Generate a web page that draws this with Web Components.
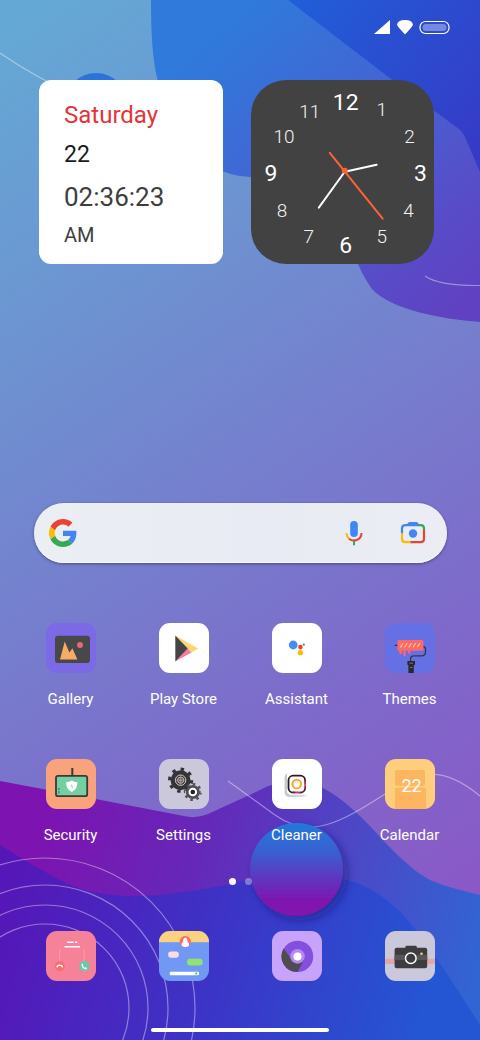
<!DOCTYPE html>
<html lang="en">
<head>
<meta charset="utf-8">
<meta name="viewport" content="width=device-width, initial-scale=1">
<title>Home</title>
<style>
    html, body {margin: 0;}
    body {font-family: Roboto, "Open Sans", sans-serif;color: #fff;background: #3a38c8;}
</style>
</head>
<body>
<home-screen>
    <wall-paper slot="wallpaper"></wall-paper>
    <status-bar slot="status"></status-bar>

    <date-card slot="widgets" day="Saturday" date="22" time="02:36:23" period="AM"></date-card>
    <clock-face slot="widgets"></clock-face>

    <search-bar slot="search"></search-bar>

    <app-tile slot="apps" label="Gallery">
        <svg viewBox="0 0 50 50">
            <rect width="50" height="50" fill="#7b69e5"/>
            <rect x="9" y="12.7" width="35" height="27.3" rx="3" fill="#484749"/>
            <path d="M14 36.4 18.7 18.6 23.4 29.4 26.4 25.2 31.4 36.4Z" fill="#f8ac63"/>
            <circle cx="34" cy="22" r="3" fill="#e66a74"/>
        </svg>
    </app-tile>
    <app-tile slot="apps" label="Play Store">
        <svg viewBox="0 0 50 50">
            <rect width="50" height="50" fill="#fff"/>
            <path d="M16.3 12.6 39.3 25.6 32.4 29.4 28.8 25.5Z" fill="#fbd86f"/>
            <path d="M16.3 38.4 28.8 25.5 32.4 29.4Z" fill="#f87b9b"/>
            <path d="M16.3 12.6 28.8 25.5 16.3 38.4Z" fill="#454547"/>
        </svg>
    </app-tile>
    <app-tile slot="apps" label="Assistant">
        <svg viewBox="0 0 50 50">
            <rect width="50" height="50" fill="#fff"/>
            <circle cx="25.5" cy="26.5" r="9.5" fill="#fdfdfd"/>
            <circle cx="21.2" cy="22" r="4.4" fill="#4a8af4"/>
            <circle cx="28.4" cy="24.1" r="2.3" fill="#ea4335"/>
            <circle cx="28.4" cy="29.7" r="2.6" fill="#fbbc05"/>
            <circle cx="31.8" cy="21.7" r="1.1" fill="#34a853"/>
        </svg>
    </app-tile>
    <app-tile slot="apps" label="Themes">
        <svg viewBox="0 0 50 50">
            <rect width="50" height="50" fill="#6470e4"/>
            <path d="M9.7 22.3H13M38 23.6Q40.5 23.6 40.5 26V29Q40.5 32.8 36.5 32.8H29Q25.6 32.8 25.6 35.6V39" fill="none" stroke="#38363c" stroke-width="1.3"/>
            <path d="M13.8 17H37Q38.4 17 38.4 18.5V26.2Q38.4 27.7 37 27.7H25.4V30A1.1 1.1 0 0 1 23.2 30V27.7H20.7V32A1.2 1.2 0 0 1 18.3 32V27.7H16.9V30A1.3 1.3 0 0 1 14.3 30V27.7H13.8Q12.4 27.7 12.4 26.2V18.5Q12.4 17 13.8 17Z" fill="#fd676e"/>
            <path d="M15.4 24.4 18 20.2M19.6 24.4 22.2 20.2M23.8 24.4 26.4 20.2M28 24.4 30.6 20.2M32.2 24.4 34.8 20.2" stroke="#fbcf74" stroke-width="1.2"/>
            <path d="M22.4 38H30V41.4L28.8 42.6V50H23.4V42.6L22.4 41.4Z" fill="#29282c"/>
            <path d="M24.5 40.2H28M25.2 44.5H27.3" stroke="#8c8c94" stroke-width=".8"/>
        </svg>
    </app-tile>
    <app-tile slot="apps" label="Security">
        <svg viewBox="0 0 50 50">
            <rect width="50" height="50" fill="#faa27c"/>
            <path d="M26.3 9V17" stroke="#39393b" stroke-width="2"/>
            <rect x="10" y="16.8" width="31.2" height="20.4" rx="2" fill="#74d0a3" stroke="#39393b" stroke-width="1.8"/>
            <path d="M25.8 21.4Q28.6 23.2 31.4 23.2Q31.8 30 25.8 33Q19.8 30 20.2 23.2Q23 23.2 25.8 21.4Z" fill="#fff"/>
            <path d="M25.6 25.4 25 27.2H26.8L26 29" fill="none" stroke="#74d0a3" stroke-width=".7"/>
            <path d="M12.9 29V31M12.9 32V34.4" stroke="#39795e" stroke-width="1.2"/>
        </svg>
    </app-tile>
    <app-tile slot="apps" label="Settings">
        <svg viewBox="0 0 50 50">
            <rect width="50" height="50" fill="#cac8da"/>
            <circle cx="21.6" cy="21.2" r="10" fill="#353436"/>
            <circle cx="21.6" cy="21.2" r="11" pathLength="80" fill="none" stroke="#353436" stroke-width="3.2" stroke-dasharray="4 6"/>
            <circle cx="21.6" cy="21.2" r="5.2" fill="none" stroke="#cfcfd4" stroke-width="1"/>
            <circle cx="21.6" cy="21.2" r="3.1" fill="#555" stroke="#cfcfd4" stroke-width=".9"/>
            <path d="M21.6 16V26.4M16.4 21.2H26.8" stroke="#9c9ca2" stroke-width=".7"/>
            <circle cx="21.6" cy="21.2" r="1.3" fill="#ee7c77"/>
            <circle cx="33.8" cy="33" r="7" fill="#514f52"/>
            <circle cx="33.8" cy="33" r="7.8" pathLength="80" fill="none" stroke="#514f52" stroke-width="2.6" stroke-dasharray="4 6"/>
            <circle cx="33.8" cy="33" r="3.3" fill="#252527" stroke="#fff" stroke-width="2"/>
        </svg>
    </app-tile>
    <app-tile slot="apps" label="Cleaner">
        <svg viewBox="0 0 50 50">
            <defs>
                <linearGradient id="ring" x1="0" y1="0" x2="1" y2="1">
                    <stop offset=".6" stop-color="#2c1a2b"/>
                    <stop offset=".78" stop-color="#e83b8c"/>
                    <stop offset=".9" stop-color="#4c1734"/>
                </linearGradient>
                <linearGradient id="paper" x1="0" y1="0" x2="1" y2="0">
                    <stop offset="0" stop-color="#c8c8c8"/>
                    <stop offset=".7" stop-color="#dadada"/>
                    <stop offset="1" stop-color="#f4f4f4"/>
                </linearGradient>
            </defs>
            <rect width="50" height="50" fill="#fff"/>
            <rect x="12.6" y="14" width="23.5" height="24" rx="4.5" fill="url(#paper)"/>
            <rect x="15" y="12" width="22" height="23.8" rx="4" fill="#fff"/>
            <rect x="16.5" y="16.7" width="16.6" height="16.8" rx="4.6" fill="#fff" stroke="url(#ring)" stroke-width="1.8"/>
            <circle cx="24.8" cy="25" r="4.4" fill="#fde3b0" stroke="#f5a832" stroke-width="1.9"/>
            <path d="M22.2 23.5H27.4L26.8 28.3H22.8Z" fill="#fff"/>
        </svg>
    </app-tile>
    <app-tile slot="apps" label="Calendar">
        <svg viewBox="0 0 50 50">
            <rect width="50" height="50" fill="#fdce7c"/>
            <rect x="10" y="11" width="30" height="15.8" rx="1.8" fill="#fdb55f"/>
            <path d="M11.5 28.8H39.5Q41 28.8 41 30.5V50H10V30.5Q10 28.8 11.5 28.8Z" fill="#fdb55f"/>
            <text x="26.5" y="33" font-size="18" text-anchor="middle" fill="#fff">22</text>
        </svg>
    </app-tile>

    <page-dots slot="pages"></page-dots>

    <app-tile slot="dock" name="Phone">
        <svg viewBox="0 0 50 50">
            <rect width="50" height="50" fill="#f6829a"/>
            <path d="M21 11.3H27.6M29 11.3H31.3M18.4 15.7H34" stroke="#fff" stroke-width="1.5"/>
            <path d="M13.7 18V30M38.2 18V30" stroke="#fba9b8" stroke-width=".7"/>
            <circle cx="13.7" cy="35.2" r="5" fill="#fd6d6b"/>
            <path d="M10.4 36.6Q10 33.6 13.7 33.6T17 36.6L15.2 36.2V35.1Q13.7 34.7 12.2 35.1V36.2Z" fill="#fff"/>
            <circle cx="38.3" cy="35.2" r="5.1" fill="#5dcfa9"/>
            <path d="M36.2 32.4 37.5 33.6 37 34.8Q37.6 36.2 38.9 36.8L40.1 36.3 41.2 37.5Q40.3 39 38.3 38Q36.2 36.8 35.4 34.5Q35.2 33.2 36.2 32.4Z" fill="#fff"/>
        </svg>
    </app-tile>
    <app-tile slot="dock" name="Messages">
        <svg viewBox="0 0 50 50">
            <rect width="50" height="50" fill="#7199f3"/>
            <rect width="50" height="11.2" fill="#fcd17f"/>
            <circle cx="26.3" cy="10.6" r="5.6" fill="#fc6c66"/>
            <path d="M26.3 6.8Q28.4 6.8 28.3 9.5Q28.2 11.6 29.9 12.1V15Q26.3 17 22.7 15V12.1Q24.4 11.6 24.3 9.5Q24.2 6.8 26.3 6.8Z" fill="#fff"/>
            <rect x="9.2" y="20.6" width="10.6" height="6.2" rx="2.8" fill="#fbdce4"/>
            <rect x="28" y="27.8" width="15.6" height="6.8" rx="3" fill="#8fe372"/>
            <rect x="10.7" y="40.8" width="29.4" height="3.4" rx="1.2" fill="#fff"/>
            <circle cx="37.2" cy="42.5" r="1.2" fill="#75d45c"/>
        </svg>
    </app-tile>
    <app-tile slot="dock" name="Browser">
        <svg viewBox="0 0 50 50">
            <rect width="50" height="50" fill="#c8a3fc"/>
            <circle cx="25.5" cy="25.4" r="15.7" fill="#844fdd"/>
            <path d="M11.6 17.4A15.7 15.7 0 0 0 25.5 41.1L32.2 28.6 18.8 27.6Z" fill="#4e4b51"/>
            <circle cx="25.5" cy="25.4" r="7.3" fill="#b688f5"/>
            <circle cx="25.5" cy="25.4" r="4" fill="#fff"/>
        </svg>
    </app-tile>
    <app-tile slot="dock" name="Camera">
        <svg viewBox="0 0 50 50">
            <rect width="50" height="50" fill="#cac8da"/>
            <rect y="27.8" width="50" height="5.2" fill="#e5a6a8"/>
            <path d="M11.6 16.8H20.4V15.8Q20.4 14.7 21.6 14.7H30.6Q31.8 14.7 31.8 15.8V16.8H40.2Q42.2 16.8 42.2 18.8V35.2Q42.2 37.2 40.2 37.2H11.6Q9.6 37.2 9.6 35.2V18.8Q9.6 16.8 11.6 16.8Z" fill="#3d3d3f"/>
            <rect x="9.6" y="23.8" width="32.6" height="5.2" fill="#565658"/>
            <circle cx="25.8" cy="27.2" r="5.3" fill="#3d3d3f" stroke="#fff" stroke-width="1.5"/>
            <circle cx="36.5" cy="22.8" r="1.3" fill="#f9d45f"/>
        </svg>
    </app-tile>
</home-screen>

<script>
class BaseElement extends HTMLElement {
    constructor() {
        super();
        this.$root = this.attachShadow({ mode: 'open' });
    }

    connectedCallback() {
        this.$root.innerHTML = this.render();
    }
}

customElements.define('home-screen', class extends BaseElement {
    render() {
        return `<style>
                :host {display: flex;flex-direction: column;position: relative;min-height: 100vh;overflow: hidden;box-sizing: border-box;padding-bottom: 8px;isolation: isolate;}
                .widgets {display: grid;grid-template-columns: 1fr 1fr;gap: 28px;padding: 0 46px 0 39px;}
                .search {margin-top: auto;padding: 60px 33px 0 34px;}
                .grid {display: grid;grid-template-columns: repeat(4, 1fr);row-gap: 50px;padding: 0 14px;}
                .apps {margin-top: 60px;}
                .pages {margin-top: 33px;}
                .dock {margin-top: 45px;}
                .handle {width: 37%;height: 4px;margin: 47px auto 0;border-radius: 2px;background: #fff;}
            </style>
            <slot name="wallpaper"></slot>
            <slot name="status"></slot>
            <section class="widgets"><slot name="widgets"></slot></section>
            <div class="search"><slot name="search"></slot></div>
            <main class="grid apps"><slot name="apps"></slot></main>
            <div class="pages"><slot name="pages"></slot></div>
            <nav class="grid dock"><slot name="dock"></slot></nav>
            <div class="handle"></div>`;
    }
});

customElements.define('wall-paper', class extends BaseElement {
    render() {
        return `<style>
                :host {position: absolute;inset: 0;z-index: -1;}
                svg {display: block;width: 100%;height: 100%;}
            </style>
            <svg viewBox="0 0 480 1040" preserveAspectRatio="xMidYMid slice" aria-hidden="true">
                <defs>
                    <linearGradient id="sky" gradientUnits="userSpaceOnUse" x1="0" y1="20" x2="560" y2="840">
                        <stop offset="0" stop-color="#64a9d5"/>
                        <stop offset=".25" stop-color="#6c96d1"/>
                        <stop offset=".5" stop-color="#7580ce"/>
                        <stop offset=".75" stop-color="#7e6aca"/>
                        <stop offset="1" stop-color="#8a58c7"/>
                    </linearGradient>
                    <linearGradient id="corner" gradientUnits="userSpaceOnUse" x1="290" y1="0" x2="480" y2="150">
                        <stop offset="0" stop-color="#205fd8"/>
                        <stop offset="1" stop-color="#363ac7"/>
                    </linearGradient>
                    <linearGradient id="blob" gradientUnits="userSpaceOnUse" x1="210" y1="40" x2="450" y2="320">
                        <stop offset="0" stop-color="#2f7ada"/>
                        <stop offset=".45" stop-color="#4662d2"/>
                        <stop offset=".8" stop-color="#594bc8"/>
                        <stop offset="1" stop-color="#6041c1"/>
                    </linearGradient>
                    <linearGradient id="hill" gradientUnits="userSpaceOnUse" x1="40" y1="820" x2="490" y2="930">
                        <stop offset="0" stop-color="#7d13b0"/>
                        <stop offset=".35" stop-color="#6528b9"/>
                        <stop offset=".65" stop-color="#4e46c5"/>
                        <stop offset="1" stop-color="#3165d4"/>
                    </linearGradient>
                    <linearGradient id="sea" gradientUnits="userSpaceOnUse" x1="0" y1="930" x2="420" y2="1040">
                        <stop offset="0" stop-color="#5517b8"/>
                        <stop offset=".5" stop-color="#3c34c6"/>
                        <stop offset="1" stop-color="#2456d3"/>
                    </linearGradient>
                    <linearGradient id="ball" x1="0" y1="0" x2="0" y2="1">
                        <stop offset="0" stop-color="#2079dc"/>
                        <stop offset=".3" stop-color="#3861d1"/>
                        <stop offset=".6" stop-color="#6035bf"/>
                        <stop offset=".85" stop-color="#8014af"/>
                        <stop offset="1" stop-color="#8212ae"/>
                    </linearGradient>
                    <filter id="drop" x="-30%" y="-30%" width="160%" height="160%">
                        <feDropShadow dx="4" dy="4" stdDeviation="5" flood-color="#15106a" flood-opacity=".5"/>
                    </filter>
                </defs>
                <rect width="480" height="1040" fill="url(#sky)"/>
                <path d="M151 0C151 45 154 70 160 88C172 135 195 168 240 176C290 180 335 205 358 264Q364 278 372 289C390 309 440 319 480 322V0Z" fill="url(#blob)"/>
                <path d="M288 0 391 79 459 129Q464 133 467 142L480 172V0Z" fill="url(#corner)"/>
                <circle cx="96" cy="104" r="31" fill="#2a74d9"/>
                <path d="M0 781 80 796 184 816Q196 819 208 814L258 791Q296 770 330 792C370 817 391 858 430 880Q446 887 480 895V1040H0Z" fill="url(#hill)"/>
                <path d="M0 845Q28 863 58 879C100 902 150 899 220 886C265 874 320 872 354 882C400 898 424 937 480 1025V1040H0Z" fill="url(#sea)"/>
                <g fill="none" stroke="#fff" stroke-opacity=".4" stroke-width="1.2">
                    <path d="M0 53Q25 70 50 83M425 276Q439 286 480 285.500M228 781 275 815C310 840 340 823 385 794C418 770 443 765 480 796"/>
                    <circle cx="45" cy="1008" r="150"/>
                    <circle cx="45" cy="1008" r="123"/>
                    <circle cx="45" cy="1008" r="103"/>
                    <circle cx="45" cy="1008" r="84"/>
                </g>
                <circle cx="296.500" cy="869.500" r="46.500" fill="url(#ball)" filter="url(#drop)"/>
            </svg>`;
    }
});

customElements.define('status-bar', class extends BaseElement {
    render() {
        return `<style>
                :host {display: flex;justify-content: flex-end;align-items: flex-start;box-sizing: border-box;height: 80px;padding: 20px 30px 0 0;}
                svg {display: block;}
            </style>
            <svg width="76" height="15" viewBox="0 0 76 15" role="img" aria-label="Signal, Wi-Fi, battery">
                <path d="M16 0V14H0Z" fill="#fff"/>
                <path d="M23 5Q23.500 0 31 0T39 5Q38 7 31 14.500Q24 7 23 5Z" fill="#fff"/>
                <rect x="46" y="1.500" width="29" height="12" rx="5.500" fill="none" stroke="#fff" stroke-width="1.200"/>
                <rect x="48.500" y="4" width="24" height="7" rx="3.500" fill="#fff" fill-opacity=".35"/>
            </svg>`;
    }
});

customElements.define('date-card', class extends BaseElement {
    render() {
        const get = name => this.getAttribute(name);
        return `<style>
                :host {display: flex;flex-direction: column;box-sizing: border-box;aspect-ratio: 1/1;padding: 19px 25px 0;border-radius: 12px;background: #fff;color: #3e3e3e;}
                div {line-height: 32px;}
                .day {font-size: 24px;color: #e5333a;}
                .date {margin-top: 8px;font-size: 23px;color: #1c1c1c;}
                .time {margin-top: 10px;font-size: 26px;}
                .period {margin-top: 6px;font-size: 20px;}
            </style>
            <div class="day">${get('day')}</div>
            <div class="date">${get('date')}</div>
            <div class="time">${get('time')}</div>
            <div class="period">${get('period')}</div>`;
    }
});

customElements.define('clock-face', class extends BaseElement {
    // x, baseline of every numeral on the 184 unit dial
    static marks = [
        [131, 36], [159, 63], [170, 101], [158, 137], [131, 163], [95, 173],
        [58, 163], [31, 137], [20, 101], [33, 63], [59, 38], [95, 30]
    ];

    render() {
        const numerals = this.constructor.marks.map(([x, y], i) => {
            const main = (i + 1) % 3 === 0;
            return `<text x="${x}" y="${y}" class="${main ? 'main' : ''}">${i + 1}</text>`;
        }).join('');
        return `<style>
                :host {display: block;aspect-ratio: 1/1;border-radius: 35px;background: #424242;}
                svg {display: block;width: 100%;height: 100%;}
                text {font-size: 19px;font-weight: 300;text-anchor: middle;fill: #f2f2f2;}
                .main {font-size: 23px;font-weight: 400;fill: #fff;}
                line {stroke: #fff;stroke-width: 2;stroke-linecap: round;}
                .second {stroke: #fb6438;}
            </style>
            <svg viewBox="0 0 184 184" role="img" aria-label="Clock">
                ${numerals}
                <line x1="94" y1="92" x2="126" y2="85"/>
                <line x1="94" y1="92" x2="68" y2="128"/>
                <line class="second" x1="79" y1="73" x2="132" y2="139"/>
                <circle cx="94" cy="91" r="3" fill="#fb6438"/>
            </svg>`;
    }
});

customElements.define('search-bar', class extends BaseElement {
    render() {
        return `<style>
                :host {display: block;}
                form {display: flex;align-items: center;box-sizing: border-box;height: 60px;padding: 0 20px 0 15px;border-radius: 30px;background: linear-gradient(90deg, #ebeff4, #e8ebf3 55%, #ecedf4);box-shadow: 0 1px 3px #2228, inset 0 -1px 0 #fffa;}
                svg {display: block;}
                input {flex: 1;min-width: 0;height: 40px;margin: 0 12px;padding: 0;border: 0;outline: 0;background: none;font: 16px Roboto, sans-serif;color: #333;}
                button {padding: 0;border: 0;background: none;}
                .lens {margin-left: 36px;}
            </style>
            <form>
                <svg width="28" height="28" viewBox="0 0 48 48" aria-hidden="true">
                    <path fill="#ea4335" d="M24 9.500c3.540 0 6.710 1.220 9.210 3.600l6.850-6.850C35.900 2.380 30.470 0 24 0 14.620 0 6.510 5.380 2.560 13.220l7.980 6.190C12.430 13.720 17.740 9.500 24 9.500z"/>
                    <path fill="#4285f4" d="M46.980 24.550c0-1.570-.15-3.090-.38-4.550H24v9.020h12.940c-.58 2.960-2.260 5.480-4.780 7.180l7.730 6c4.510-4.180 7.090-10.360 7.090-17.650z"/>
                    <path fill="#fbbc05" d="M10.530 28.590c-.48-1.450-.76-2.990-.76-4.590s.27-3.140.76-4.590l-7.980-6.190C.92 16.460 0 20.120 0 24c0 3.880.92 7.540 2.560 10.780l7.970-6.190z"/>
                    <path fill="#34a853" d="M24 48c6.480 0 11.930-2.130 15.890-5.810l-7.730-6c-2.150 1.450-4.920 2.300-8.160 2.300-6.260 0-11.570-4.220-13.470-9.910l-7.980 6.190C6.510 42.620 14.620 48 24 48z"/>
                </svg>
                <input type="search" aria-label="Search">
                <button type="button" aria-label="Voice search">
                    <svg width="18" height="26" viewBox="0 0 18 26" fill="none" stroke-width="2">
                        <rect x="5.200" y="1" width="7.600" height="16" rx="3.800" fill="#4285f4"/>
                        <path d="M1.500 13Q1.500 16.500 4 18.700" stroke="#fbbc05"/>
                        <path d="M4 18.700C8 22.200 16.500 20.500 16.500 13" stroke="#ea4335"/>
                        <path d="M9 21V25.200" stroke="#34a853"/>
                    </svg>
                </button>
                <button type="button" class="lens" aria-label="Search by camera">
                    <svg width="28" height="26" viewBox="0 0 28 26" fill="none" stroke-width="2.200">
                        <path d="M8 4.200Q9.500 2 10.500 2H17.500Q18.500 2 20 4.200V5.800H8Z" fill="#4285f4"/>
                        <path d="M3 13.500V8.500Q3 5.200 6.500 5.200H20" stroke="#4285f4"/>
                        <path d="M19.500 5.200H21.500Q25 5.200 25 8.500V10" stroke="#34a853"/>
                        <path d="M3 13.500V18.800Q3 22.200 6.500 22.200H12" stroke="#fbbc05"/>
                        <path d="M25 9.800V18.800Q25 22.200 21.500 22.200H11.500" stroke="#ea4335"/>
                        <circle cx="14" cy="13.500" r="4.200" fill="#4285f4"/>
                    </svg>
                </button>
            </form>`;
    }
});

customElements.define('app-tile', class extends BaseElement {
    render() {
        const label = this.getAttribute('label');
        const name = label || this.getAttribute('name');
        return `<style>
                :host {display: block;min-width: 0;}
                a {display: flex;flex-direction: column;align-items: center;gap: 16px;color: inherit;text-decoration: none;}
                .icon {width: 50px;height: 50px;border-radius: 11px;overflow: hidden;}
                ::slotted(svg) {display: block;}
                .label {font-size: 15px;line-height: 20px;}
            </style>
            <a href="#" aria-label="${name}">
                <div class="icon"><slot></slot></div>
                ${label ? `<span class="label">${label}</span>` : ''}
            </a>`;
    }
});

customElements.define('page-dots', class extends BaseElement {
    render() {
        return `<style>
                :host {display: flex;justify-content: center;gap: 9px;}
                i {width: 7px;height: 7px;margin-bottom: 1px;border-radius: 50%;background: #fff;}
                i + i {opacity: .35;}
            </style>
            <i></i><i></i>`;
    }
});
</script>
</body>
</html>
